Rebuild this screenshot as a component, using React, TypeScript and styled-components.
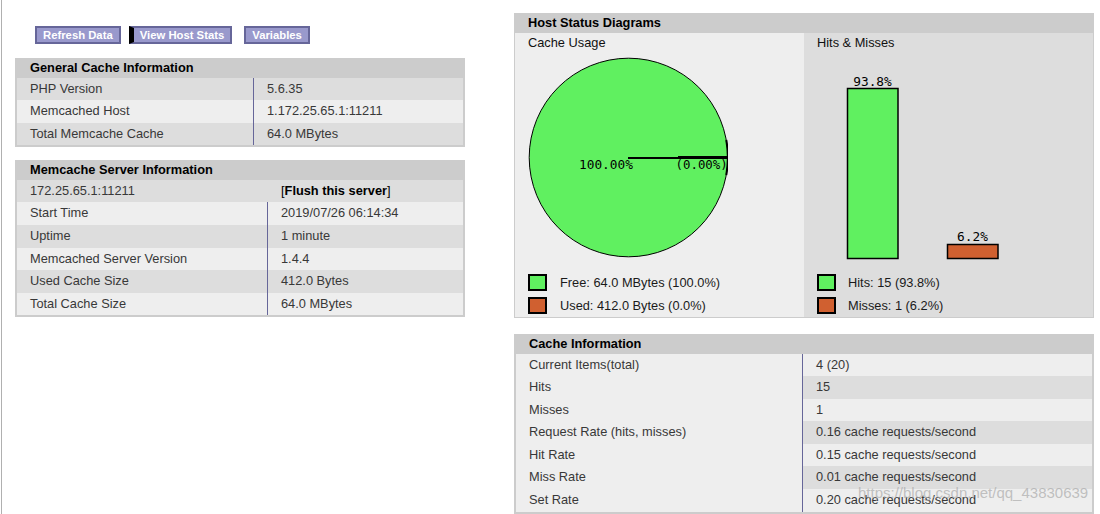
import React from "react";
import styled, { createGlobalStyle } from "styled-components";

const GlobalStyle = createGlobalStyle`
  html, body { margin: 0; padding: 0; background: #fff; }
  body { font-family: "Liberation Sans", Arial, Helvetica, sans-serif; }
  * { box-sizing: border-box; }
`;

const Page = styled.div`
  position: relative;
  display: flex;
  align-items: flex-start;
  min-height: 514px;
  margin-left: 1px;
  border-left: 1px solid #b0b0b0;
`;

const LeftCol = styled.div`
  margin-left: 13px;
  padding-top: 26px;
  width: 450px;
  display: flex;
  flex-direction: column;
`;

const RightCol = styled.div`
  margin-left: 49px;
  padding-top: 13px;
  width: 580px;
  display: flex;
  flex-direction: column;
`;

const Menu = styled.div`
  display: flex;
  height: 18px;
  margin-bottom: 14px;
`;

const MenuButton = styled.a<{ $active?: boolean; $gap: number }>`
  display: inline-flex;
  align-items: center;
  height: 18px;
  margin-left: ${(p) => p.$gap}px;
  padding: 0 6px;
  background: #9999cc;
  border: 2px solid #666699;
  border-left: ${(p) => (p.$active ? "5px solid #000" : "2px solid #666699")};
  color: #fff;
  font-size: 11.3px;
  font-weight: bold;
  text-decoration: none;
  white-space: nowrap;
`;

const InfoBox = styled.div<{ $width: number }>`
  width: ${(p) => p.$width}px;
  border: 1px solid #ccc;
  background: #ccc;
  margin-bottom: 13px;
`;

const BoxTitle = styled.h2<{ $height: number; $pad: number }>`
  margin: 0;
  height: ${(p) => p.$height}px;
  line-height: ${(p) => p.$height}px;
  padding: 0 ${(p) => p.$pad}px;
  background: #ccc;
  color: #000;
  font-size: 12.8px;
  font-weight: bold;
`;

const Table = styled.div`
  border: 1px solid #ccc;
  display: flex;
  flex-direction: column;
`;

const Row = styled.div<{ $cols: number; $bg: string }>`
  display: grid;
  grid-template-columns: ${(p) => p.$cols}px 1fr;
  background: ${(p) => p.$bg};
`;

const Cell = styled.div<{ $divider?: boolean; $bg?: string }>`
  height: 22.6px;
  line-height: 22.6px;
  padding: 0 13px;
  font-size: 12.8px;
  color: #383838;
  white-space: nowrap;
  overflow: hidden;
  border-right: ${(p) => (p.$divider ? "1px solid #666699" : "none")};
  background: ${(p) => p.$bg || "transparent"};
`;

const Strong = styled.b`
  color: #000;
`;

const FlushLink = styled.span`
  color: #000;
`;

const GraphBox = styled.div`
  width: 580px;
  margin-bottom: 16px;
`;

const GraphTable = styled.div`
  border: 1px solid #ccc;
  display: grid;
  grid-template-columns: 1fr 1fr;
`;

const GraphCell = styled.div<{ $bg: string }>`
  background: ${(p) => p.$bg};
  padding: 2px 13px 0 13px;
  display: flex;
  flex-direction: column;
`;

const CellTitle = styled.div`
  height: 15px;
  line-height: 15px;
  font-size: 12.8px;
  color: #111;
`;

const Chart = styled.svg`
  display: block;
  width: 200px;
  height: 221px;
`;

const LegendRow = styled.div`
  height: 23px;
  display: flex;
  align-items: center;
  font-size: 12.8px;
  color: #1a1a1a;
  white-space: nowrap;
`;

const Swatch = styled.span<{ $color: string; $gap: number }>`
  display: inline-block;
  width: 19px;
  height: 17px;
  border: 2px solid #000;
  background: ${(p) => p.$color};
  margin-right: ${(p) => p.$gap}px;
`;

const Watermark = styled.div`
  position: absolute;
  left: 856px;
  top: 484px;
  font-size: 15px;
  color: rgba(170, 170, 170, 0.7);
  white-space: nowrap;
  pointer-events: none;
`;

const GREEN = "#60F060";
const RED = "#D06030";
const MONO = `"DejaVu Sans Mono", "Liberation Mono", monospace`;

const shade = (i: number) => (i % 2 === 0 ? "#dddddd" : "#eeeeee");

const generalRows: [string, string][] = [
  ["PHP Version", "5.6.35"],
  ["Memcached Host", "1.172.25.65.1:11211"],
  ["Total Memcache Cache", "64.0 MBytes"],
];

const serverRows: [string, string][] = [
  ["Start Time", "2019/07/26 06:14:34"],
  ["Uptime", "1 minute"],
  ["Memcached Server Version", "1.4.4"],
  ["Used Cache Size", "412.0 Bytes"],
  ["Total Cache Size", "64.0 MBytes"],
];

const cacheRows: [string, string][] = [
  ["Current Items(total)", "4 (20)"],
  ["Hits", "15"],
  ["Misses", "1"],
  ["Request Rate (hits, misses)", "0.16 cache requests/second"],
  ["Hit Rate", "0.15 cache requests/second"],
  ["Miss Rate", "0.01 cache requests/second"],
  ["Set Rate", "0.20 cache requests/second"],
];

function PieChart() {
  return (
    <Chart viewBox="0 0 200 221">
      <circle cx={100.5} cy={107.5} r={99.3} fill={GREEN} stroke="#000" strokeWidth={1} />
      <path
        d="M 198.3 90 A 99.3 99.3 0 0 1 198.3 125"
        fill="none"
        stroke="#000"
        strokeWidth={2}
      />
      <rect x={100} y={107} width={100} height={2} fill="#000" />
      <rect x={150} y={106} width={50} height={3} fill="#000" />
      <text x={51} y={118.5} fontFamily={MONO} fontSize={12.8} fill="#000">
        100.00%
      </text>
      <text x={147.5} y={118.5} fontFamily={MONO} fontSize={12.4} fill="#000">
        (0.00%)
      </text>
    </Chart>
  );
}

function BarChart() {
  return (
    <Chart viewBox="0 0 200 221">
      <rect x={30.5} y={38.5} width={50.5} height={170} fill={GREEN} stroke="#000" strokeWidth={1.5} />
      <text x={55.5} y={36} textAnchor="middle" fontFamily={MONO} fontSize={12.8} fill="#000">
        93.8%
      </text>
      <rect x={130.5} y={194.5} width={50.5} height={14} fill={RED} stroke="#000" strokeWidth={1.5} />
      <text x={155.5} y={191} textAnchor="middle" fontFamily={MONO} fontSize={12.8} fill="#000">
        6.2%
      </text>
    </Chart>
  );
}

export default function App() {
  return (
    <>
      <GlobalStyle />
      <Page>
        <LeftCol>
          <Menu>
            <MenuButton $gap={20}>Refresh Data</MenuButton>
            <MenuButton $gap={8} $active>
              View Host Stats
            </MenuButton>
            <MenuButton $gap={12}>Variables</MenuButton>
          </Menu>

          <InfoBox $width={450}>
            <BoxTitle $height={17.5} $pad={14}>General Cache Information</BoxTitle>
            <Table>
              {generalRows.map(([k, v], i) => (
                <Row key={k} $cols={237} $bg={shade(i)}>
                  <Cell $divider>{k}</Cell>
                  <Cell>{v}</Cell>
                </Row>
              ))}
            </Table>
          </InfoBox>

          <InfoBox $width={450}>
            <BoxTitle $height={17.5} $pad={14}>Memcache Server Information</BoxTitle>
            <Table>
              <Row $cols={251} $bg={shade(0)}>
                <Cell>172.25.65.1:11211</Cell>
                <Cell>
                  <FlushLink>
                    [<Strong>Flush this server</Strong>]
                  </FlushLink>
                </Cell>
              </Row>
              {serverRows.map(([k, v], i) => (
                <Row key={k} $cols={251} $bg={shade(i + 1)}>
                  <Cell $divider>{k}</Cell>
                  <Cell>{v}</Cell>
                </Row>
              ))}
            </Table>
          </InfoBox>
        </LeftCol>

        <RightCol>
          <GraphBox>
            <BoxTitle $height={19} $pad={14}>Host Status Diagrams</BoxTitle>
            <GraphTable>
              <GraphCell $bg="#eeeeee">
                <CellTitle>Cache Usage</CellTitle>
                <PieChart />
                <LegendRow>
                  <Swatch $color={GREEN} $gap={13} />
                  Free: 64.0 MBytes (100.0%)
                </LegendRow>
                <LegendRow>
                  <Swatch $color={RED} $gap={13} />
                  Used: 412.0 Bytes (0.0%)
                </LegendRow>
              </GraphCell>
              <GraphCell $bg="#dddddd">
                <CellTitle>Hits &amp; Misses</CellTitle>
                <BarChart />
                <LegendRow>
                  <Swatch $color={GREEN} $gap={12} />
                  Hits: 15 (93.8%)
                </LegendRow>
                <LegendRow>
                  <Swatch $color={RED} $gap={12} />
                  Misses: 1 (6.2%)
                </LegendRow>
              </GraphCell>
            </GraphTable>
          </GraphBox>

          <InfoBox $width={580}>
            <BoxTitle $height={17.5} $pad={14}>Cache Information</BoxTitle>
            <Table>
              {cacheRows.map(([k, v], i) => (
                <Row key={k} $cols={287} $bg={shade(i + 1)}>
                  <Cell $divider $bg="#eeeeee">
                    {k}
                  </Cell>
                  <Cell>{v}</Cell>
                </Row>
              ))}
            </Table>
          </InfoBox>
        </RightCol>

        <Watermark>https://blog.csdn.net/qq_43830639</Watermark>
      </Page>
    </>
  );
}
